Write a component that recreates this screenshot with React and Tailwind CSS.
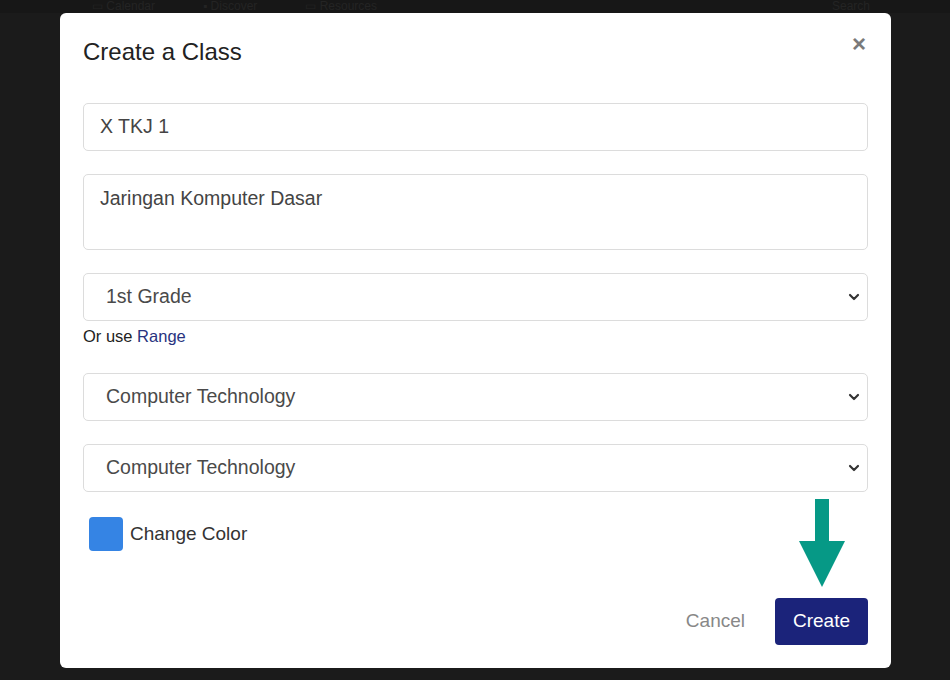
import { ChevronDown } from 'lucide-react'

function Field({ children, className = '' }) {
  return (
    <div className={`w-full rounded-[5px] border border-[#dcdcdc] bg-white ${className}`}>
      {children}
    </div>
  )
}

function SelectBox({ label, className = '' }) {
  return (
    <Field className={`h-[48px] flex items-center justify-between pl-[22px] pr-[5px] ${className}`}>
      <span className="text-[19.5px] text-[#4a4a4a]">{label}</span>
      <ChevronDown className="w-[16px] h-[16px] text-[#333]" strokeWidth={3.2} />
    </Field>
  )
}

export default function App() {
  return (
    <div
      className="relative w-[950px] h-[680px] overflow-hidden bg-[#1b1b1b]"
      style={{ fontFamily: '"Liberation Sans", Arial, sans-serif' }}
    >
      {/* page behind the overlay */}
      <div className="absolute inset-x-0 top-0 h-[13px] bg-[#171717] flex items-center text-[12px] text-[#242424] leading-[13px]">
        <span className="ml-[92px]">▭ Calendar</span>
        <span className="ml-[48px]">▪ Discover</span>
        <span className="ml-[48px]">▭ Resources</span>
        <span className="ml-auto mr-[80px]">Search</span>
      </div>

      {/* modal */}
      <div className="absolute left-[60px] top-[13px] w-[831px] h-[655px] rounded-[6px] bg-white px-[23px]">
        <div className="flex items-start justify-between pt-[25px]">
          <h2 className="text-[24px] text-[#222] leading-[28px]">Create a Class</h2>
          <span className="mt-[-6px] mr-[2px] text-[24px] font-bold text-[#7a7a7a] leading-none">×</span>
        </div>

        <Field className="mt-[37px] h-[48px] flex items-center px-[16px]">
          <span className="text-[19.5px] text-[#444]">X TKJ 1</span>
        </Field>

        <Field className="mt-[23px] h-[76px] px-[16px] pt-[9px]">
          <span className="text-[19.5px] text-[#444]">Jaringan Komputer Dasar</span>
        </Field>

        <SelectBox label="1st Grade" className="mt-[23px]" />
        <p className="mt-[6px] text-[16.5px] text-[#222] leading-[18px]">
          Or use <span className="text-[#283380]">Range</span>
        </p>

        <SelectBox label="Computer Technology" className="mt-[28px]" />
        <SelectBox label="Computer Technology" className="mt-[23px]" />

        <div className="mt-[25px] ml-[6px] flex items-center gap-[7px]">
          <div className="w-[34px] h-[34px] rounded-[4px] bg-[#3584e4]" />
          <span className="text-[19px] text-[#333]">Change Color</span>
        </div>

        <div className="mt-[47px] flex items-center justify-end">
          <span className="mr-[30px] text-[19px] text-[#888]">Cancel</span>
          <button className="relative w-[93px] h-[47px] rounded-[4px] bg-[#1b237a] text-white text-[19px]">
            Create
            {/* pointing arrow */}
            <svg
              className="absolute left-[24px] top-[-99px]"
              width="46"
              height="88"
              viewBox="0 0 46 88"
            >
              <path d="M16 0h14v42h16L23 88 0 42h16z" fill="#069986" />
            </svg>
          </button>
        </div>
      </div>
    </div>
  )
}
